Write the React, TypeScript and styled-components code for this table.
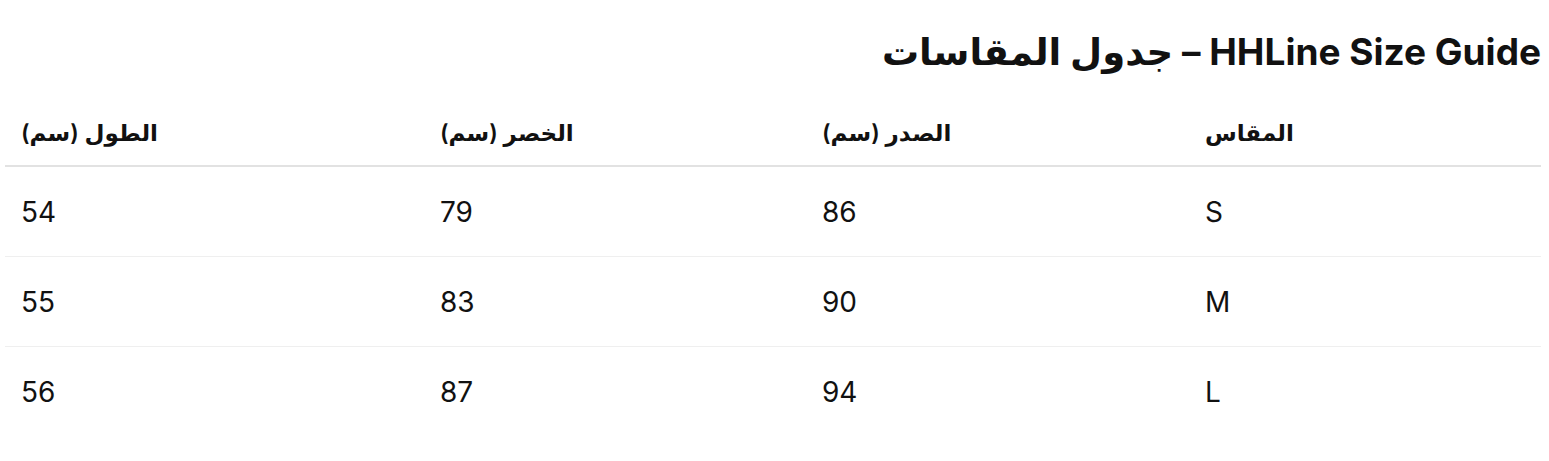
import React from "react";
import styled, { createGlobalStyle } from "styled-components";

const Global = createGlobalStyle`
  html, body { margin: 0; padding: 0; background: #fff; }
  body { font-family: Inter, "DejaVu Sans", sans-serif; color: #111; }
`;

const Page = styled.div`
  direction: rtl;
  padding: 28px 8px 0 5px;
`;

const Title = styled.h2`
  margin: 0 0 25px 0;
  font-size: 37px;
  font-weight: 700;
  line-height: 48px;
  text-align: right;
  color: #111;
`;

const Table = styled.div`
  display: grid;
  grid-template-columns: 352px 383px 382px 1fr;
`;

const HeadCell = styled.div`
  padding: 0 16px;
  height: 64px;
  display: flex;
  align-items: center;
  justify-content: flex-end;
  font-size: 23px;
  font-weight: 600;
  border-bottom: 2px solid #e2e2e2;
`;

const HeadText = styled.span`
  direction: rtl;
`;

const Cell = styled.div<{ $last?: boolean }>`
  padding: 0 16px;
  height: 89px;
  display: flex;
  align-items: center;
  justify-content: flex-end;
  font-size: 28px;
  font-weight: 400;
  border-bottom: ${(p) => (p.$last ? "none" : "1px solid #efefef")};
`;

const headers = ["المقاس", "الصدر (سم)", "الخصر (سم)", "الطول (سم)"];
const rows = [
  ["S", "86", "79", "54"],
  ["M", "90", "83", "55"],
  ["L", "94", "87", "56"],
];

export default function App() {
  return (
    <>
      <Global />
      <Page>
        <Title>HHLine Size Guide – جدول المقاسات</Title>
        <Table>
          {headers.map((h) => (
            <HeadCell key={h}>
              <HeadText>{h}</HeadText>
            </HeadCell>
          ))}
          {rows.map((r, i) =>
            r.map((c, j) => (
              <Cell key={`${i}-${j}`} $last={i === rows.length - 1}>
                {c}
              </Cell>
            ))
          )}
        </Table>
      </Page>
    </>
  );
}
